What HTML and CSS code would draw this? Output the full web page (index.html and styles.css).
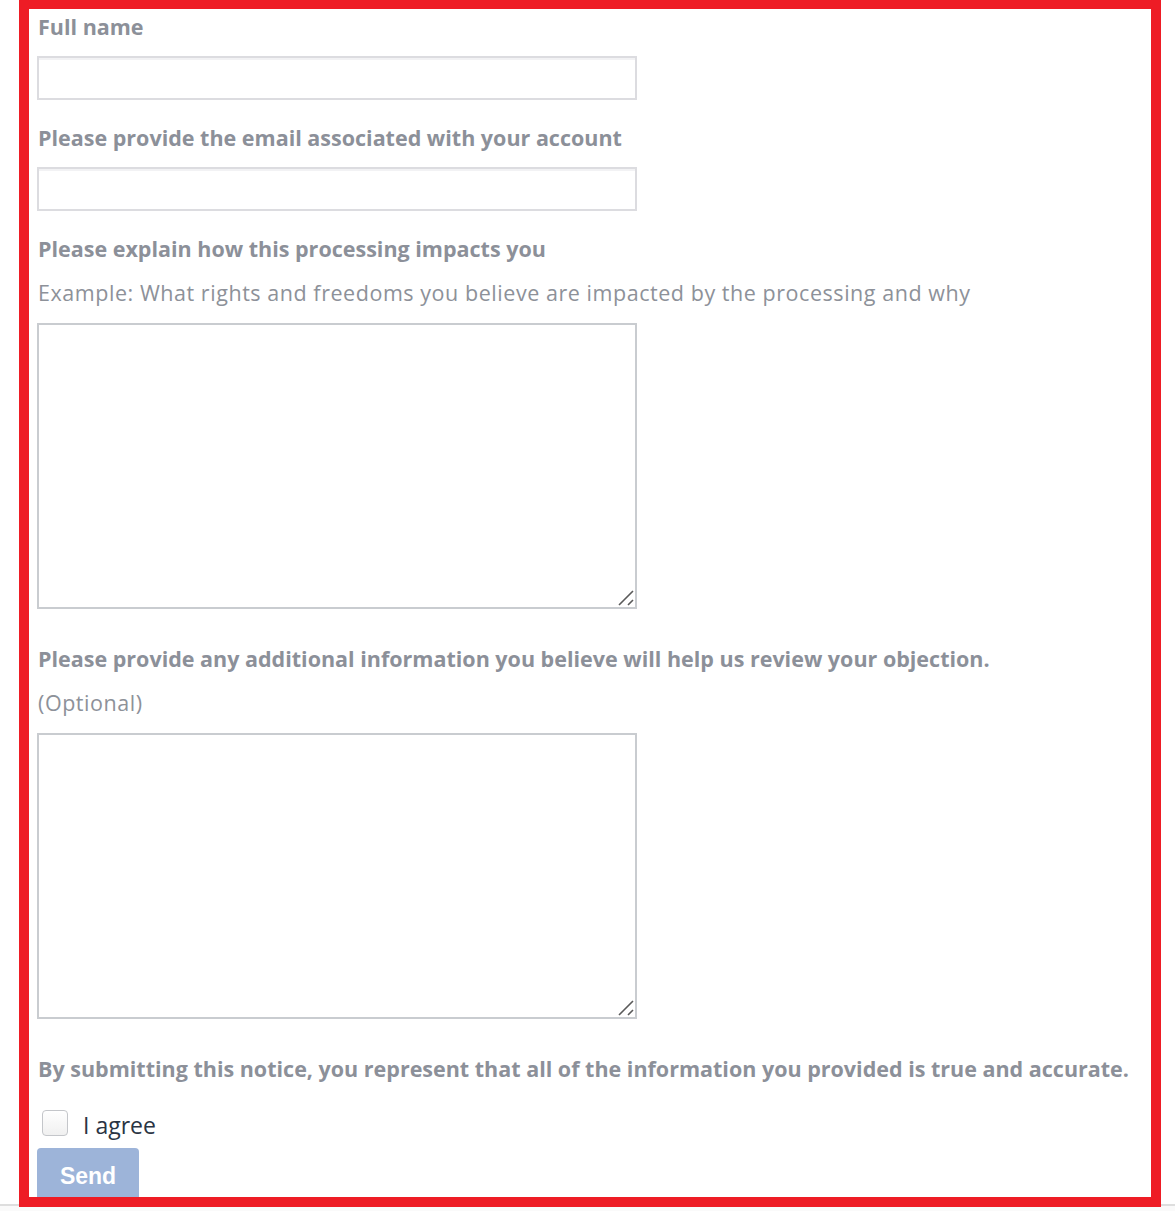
FILE: index.html
```html
<!DOCTYPE html>
<html lang="en">
<head>
<meta charset="utf-8">
<title>Objection form</title>
<link rel="stylesheet" href="styles.css">
</head>
<body>
<div class="page">
  <form class="form">
    <label class="label label-first" for="fullname">Full name</label>
    <input class="field" id="fullname" type="text">

    <label class="label" for="email">Please provide the email associated with your account</label>
    <input class="field" id="email" type="email">

    <label class="label" for="impact">Please explain how this processing impacts you</label>
    <p class="help">Example: What rights and freedoms you believe are impacted by the processing and why</p>
    <div class="area-wrap">
      <textarea class="area" id="impact"></textarea>
      <svg class="grip" width="18" height="18" viewBox="0 0 18 18" aria-hidden="true">
        <path d="M2 16 L16 2 M11 16 L16 11" stroke="#5a5a5a" stroke-width="1.6" fill="none"/>
      </svg>
    </div>

    <label class="label label-after-area" for="extra">Please provide any additional information you believe will help us review your objection.</label>
    <p class="help">(Optional)</p>
    <div class="area-wrap">
      <textarea class="area" id="extra"></textarea>
      <svg class="grip" width="18" height="18" viewBox="0 0 18 18" aria-hidden="true">
        <path d="M2 16 L16 2 M11 16 L16 11" stroke="#5a5a5a" stroke-width="1.6" fill="none"/>
      </svg>
    </div>

    <p class="label label-after-area">By submitting this notice, you represent that all of the information you provided is true and accurate.</p>

    <div class="agree">
      <span class="check"></span>
      <span class="agree-text">I agree</span>
    </div>
    <button class="send" type="button">Send</button>
  </form>
</div>
<div class="frame"></div>
</body>
</html>
```

FILE: styles.css
```css
html, body {
  margin: 0;
  padding: 0;
  background: #fafafa;
}

.page {
  height: 1204px;
  overflow: hidden;
  background: #ffffff;
  border-bottom: 2px solid #dedede;
}

.form {
  display: flex;
  flex-direction: column;
  align-items: flex-start;
  padding: 0 0 0 37px;
  font-family: "Open Sans", "Lato", sans-serif;
}

.label {
  display: block;
  margin: 26px 0 0 1px;
  font-size: 21.5px;
  line-height: 24px;
  font-weight: 700;
  color: #8c9099;
}

.label-first {
  margin-top: 15px;
}

.label-after-area {
  margin-top: 38px;
}

.field {
  box-sizing: border-box;
  width: 600px;
  height: 44px;
  margin: 17px 0 0 0;
  border: 2px solid #dcdce0;
  box-shadow: inset 0 2px 0 #f2f2f4;
  background: #fff;
  padding: 0 10px;
  font-size: 18px;
  outline: none;
}

.help {
  margin: 20px 0 0 1px;
  font-size: 21.5px;
  line-height: 24px;
  font-weight: 400;
  letter-spacing: 0.55px;
  color: #8d9199;
}

.area-wrap {
  position: relative;
  margin: 18px 0 0 0;
}

.area {
  box-sizing: border-box;
  display: block;
  width: 600px;
  height: 286px;
  margin: 0;
  border: 2px solid #c9ccd0;
  background: #fff;
  resize: none;
  outline: none;
}

.grip {
  position: absolute;
  right: 2px;
  bottom: 2px;
}

.agree {
  display: flex;
  align-items: center;
  gap: 15px;
  margin: 25px 0 0 5px;
}

.check {
  box-sizing: border-box;
  width: 26px;
  height: 26px;
  border: 1px solid #c4c6ca;
  border-radius: 4px;
  background: linear-gradient(#ffffff, #f0f0f0);
}

.agree-text {
  font-size: 23px;
  line-height: 30px;
  color: #2a3443;
  margin-top: 4px;
}

.send {
  margin: 8px 0 0 0;
  width: 102px;
  height: 56px;
  border: none;
  border-radius: 4px;
  background: #9db4d9;
  color: #ffffff;
  font-family: "Liberation Sans", Arial, sans-serif;
  font-weight: 700;
  font-size: 23px;
  padding: 0;
}

.frame {
  position: absolute;
  left: 19px;
  top: -1px;
  width: 1122px;
  height: 1188px;
  border: 10px solid #ee1c25;
  pointer-events: none;
}
```
